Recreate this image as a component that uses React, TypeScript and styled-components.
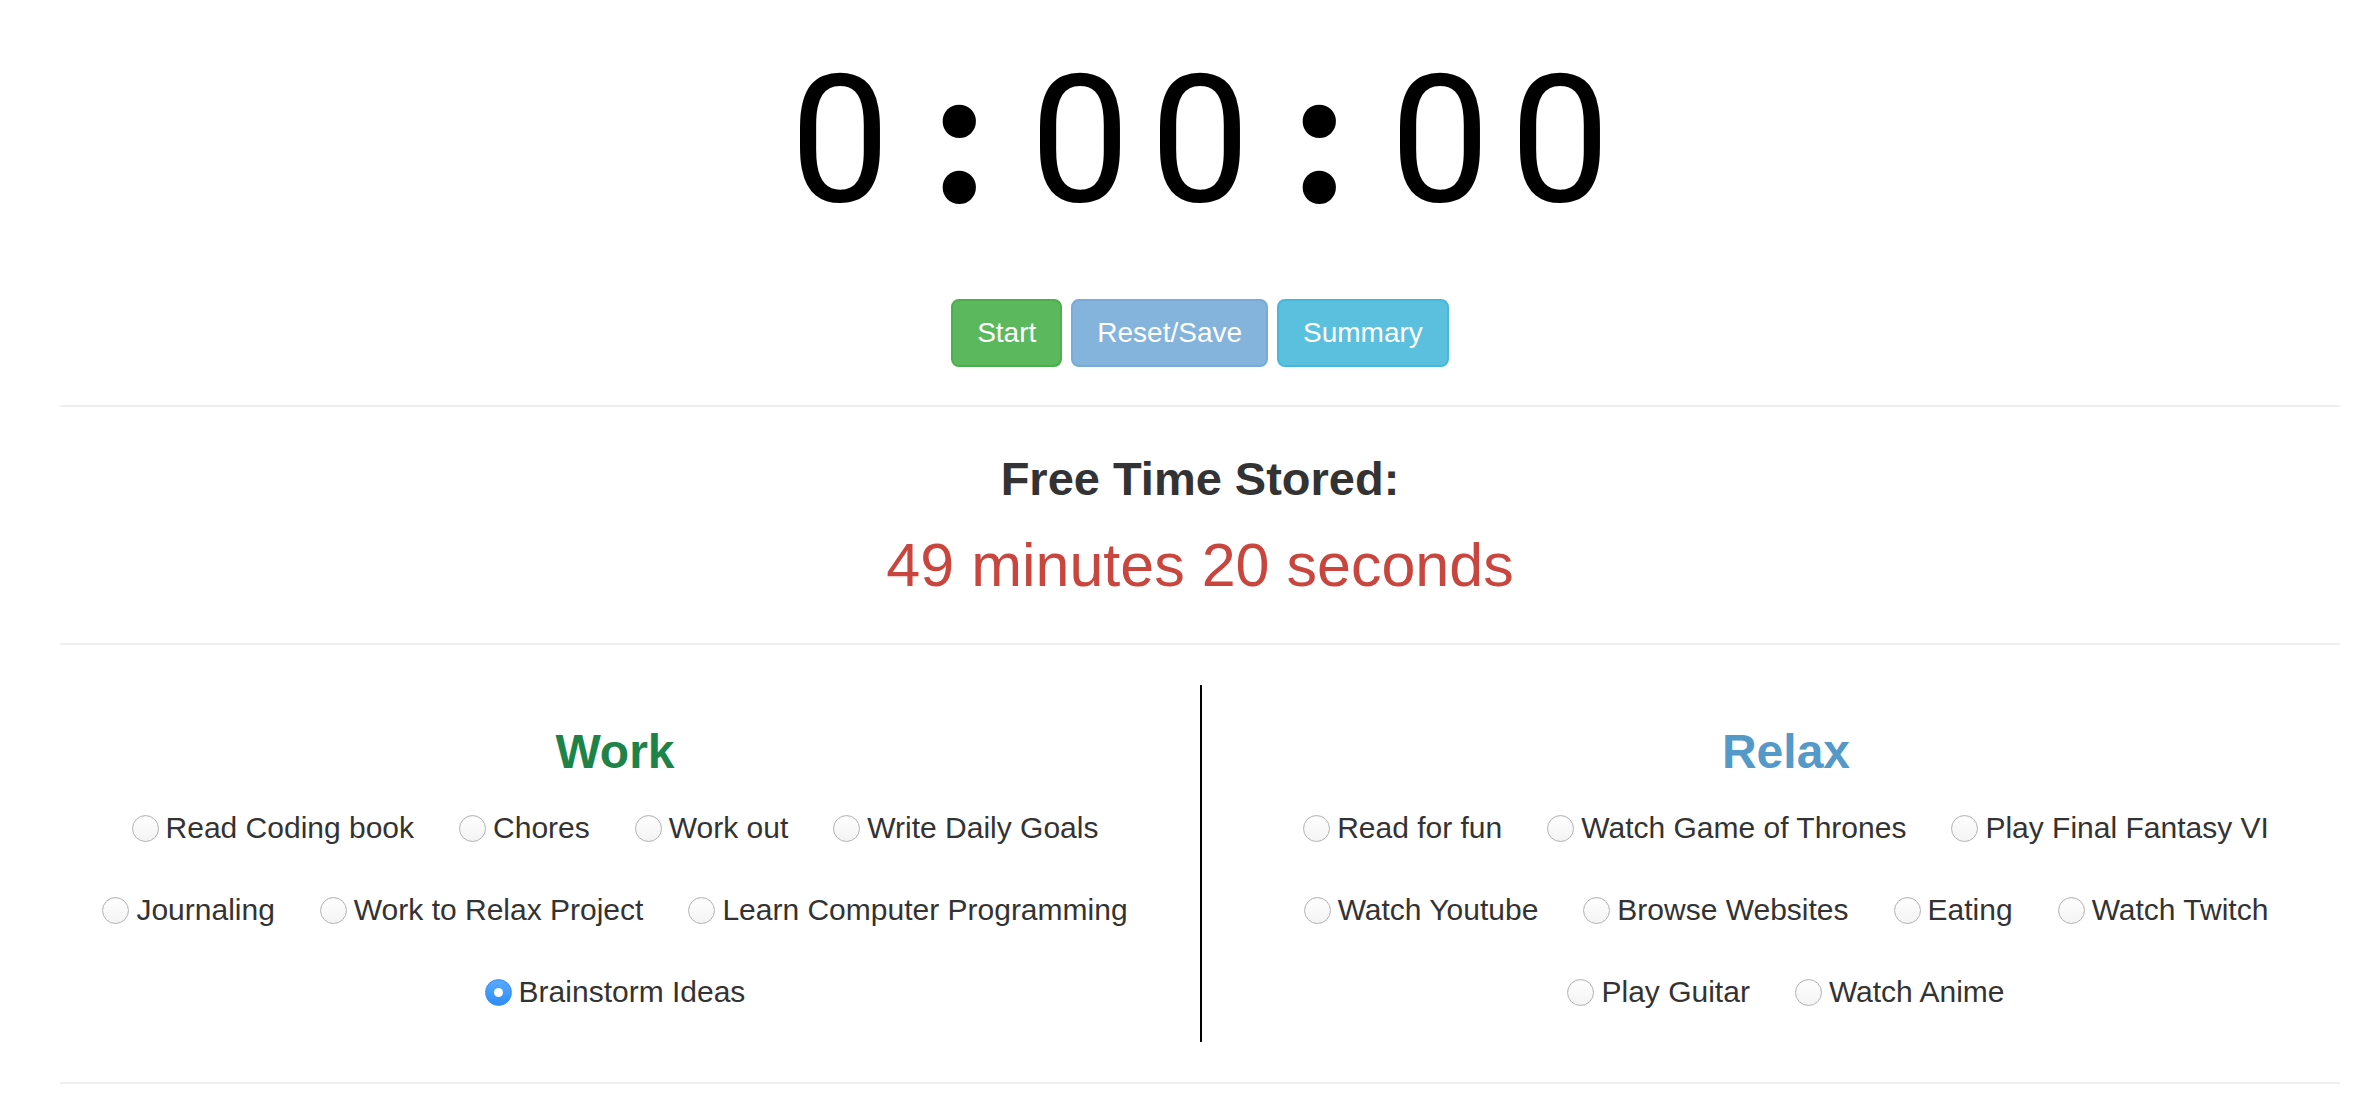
import React, { useState } from "react";
import styled, { createGlobalStyle } from "styled-components";

const GlobalStyle = createGlobalStyle`
  html, body {
    margin: 0;
    padding: 0;
    background: #ffffff;
  }
  body {
    font-family: "Liberation Sans", Arial, Helvetica, sans-serif;
    color: #333333;
  }
  * { box-sizing: border-box; }
`;

const Page = styled.div`
  width: 2370px;
  padding: 0 30px 0 60px;
`;

const Timer = styled.div`
  margin-top: 33px;
  height: 198px;
  display: flex;
  justify-content: center;
  align-items: baseline;
  color: #000000;
`;

const Glyph = styled.span<{ $colon?: boolean }>`
  display: inline-block;
  width: 120px;
  text-align: center;
  line-height: 198px;
  font-family: ${(p) =>
    p.$colon ? `"Liberation Serif", "Times New Roman", serif` : `Roboto, "Liberation Sans", Arial, sans-serif`};
  font-weight: ${(p) => (p.$colon ? 700 : 400)};
  font-size: ${(p) => (p.$colon ? "206px" : "178px")};
`;

const ButtonBar = styled.div`
  display: flex;
  justify-content: center;
  gap: 9px;
  margin-top: 68px;
`;

const Button = styled.button<{ $bg: string; $border: string }>`
  font-family: "Liberation Sans", Arial, Helvetica, sans-serif;
  font-size: 28px;
  line-height: 40px;
  padding: 12px 24px;
  border: 2px solid ${(p) => p.$border};
  border-radius: 8px;
  background: ${(p) => p.$bg};
  color: #ffffff;
  cursor: pointer;
`;

const Rule = styled.hr<{ $top: number; $bottom: number }>`
  border: 0;
  border-top: 2px solid #eeeeee;
  margin: ${(p) => `${p.$top}px 0 ${p.$bottom}px`};
  height: 0;
`;

const StoredTitle = styled.h3`
  margin: 0;
  font-size: 47px;
  line-height: 53px;
  font-weight: 700;
  color: #333333;
  text-align: center;
`;

const StoredValue = styled.h2`
  margin: 27px 0 0;
  font-size: 61px;
  line-height: 66px;
  font-weight: 400;
  color: #c9463e;
  text-align: center;
`;

const Columns = styled.div`
  display: grid;
  grid-template-columns: 1fr 1fr;
  margin: 40px -30px 0;
`;

const Column = styled.section<{ $divider?: boolean }>`
  padding: 40px 30px 30px;
  border-left: ${(p) => (p.$divider ? "2px solid #000000" : "0")};
`;

const ColumnTitle = styled.h3<{ $color: string }>`
  margin: 0 0 29px;
  font-size: 48px;
  line-height: 53px;
  font-weight: 700;
  color: ${(p) => p.$color};
  text-align: center;
`;

const Options = styled.div`
  display: flex;
  flex-wrap: wrap;
  justify-content: center;
  column-gap: 45px;
  row-gap: 41px;
`;

const Option = styled.label`
  display: flex;
  align-items: center;
  gap: 7px;
  font-size: 30px;
  line-height: 41px;
  color: #333333;
  cursor: pointer;
  white-space: nowrap;
`;

const Radio = styled.input`
  appearance: none;
  -webkit-appearance: none;
  margin: 2px 0 0;
  width: 27px;
  height: 27px;
  border-radius: 50%;
  border: 1.5px solid #b3b3b3;
  background: linear-gradient(#ffffff, #f3f3f3);
  box-shadow: inset 0 1px 1px rgba(0, 0, 0, 0.05);
  flex: none;
  display: grid;
  place-items: center;
  cursor: pointer;

  &:checked {
    border-color: #3a8ef5;
    background: linear-gradient(#5aabff, #2f8cf6);
  }
  &:checked::after {
    content: "";
    width: 9px;
    height: 9px;
    border-radius: 50%;
    background: #ffffff;
  }
`;

const work = [
  "Read Coding book",
  "Chores",
  "Work out",
  "Write Daily Goals",
  "Journaling",
  "Work to Relax Project",
  "Learn Computer Programming",
  "Brainstorm Ideas",
];

const relax = [
  "Read for fun",
  "Watch Game of Thrones",
  "Play Final Fantasy VI",
  "Watch Youtube",
  "Browse Websites",
  "Eating",
  "Watch Twitch",
  "Play Guitar",
  "Watch Anime",
];

export default function App() {
  const [choice, setChoice] = useState("Brainstorm Ideas");
  const time = "0:00:00";

  const renderGroup = (items: string[]) => (
    <Options>
      {items.map((item) => (
        <Option key={item}>
          <Radio
            type="radio"
            name="activity"
            checked={choice === item}
            onChange={() => setChoice(item)}
          />
          {item}
        </Option>
      ))}
    </Options>
  );

  return (
    <>
      <GlobalStyle />
      <Page>
        <Timer aria-label={time}>
          {time.split("").map((ch, i) => (
            <Glyph key={i} $colon={ch === ":"}>
              {ch}
            </Glyph>
          ))}
        </Timer>
        <ButtonBar>
          <Button $bg="#5cb85c" $border="#4cae4c">Start</Button>
          <Button $bg="#84b3dc" $border="#7aaad6">Reset/Save</Button>
          <Button $bg="#5bc0de" $border="#46b8da">Summary</Button>
        </ButtonBar>
        <Rule $top={38} $bottom={45} />
        <StoredTitle>Free Time Stored:</StoredTitle>
        <StoredValue>49 minutes 20 seconds</StoredValue>
        <Rule $top={45} $bottom={0} />
        <Columns>
          <Column>
            <ColumnTitle $color="#1d8348">Work</ColumnTitle>
            {renderGroup(work)}
          </Column>
          <Column $divider>
            <ColumnTitle $color="#5499c7">Relax</ColumnTitle>
            {renderGroup(relax)}
          </Column>
        </Columns>
        <Rule $top={40} $bottom={0} />
      </Page>
    </>
  );
}
